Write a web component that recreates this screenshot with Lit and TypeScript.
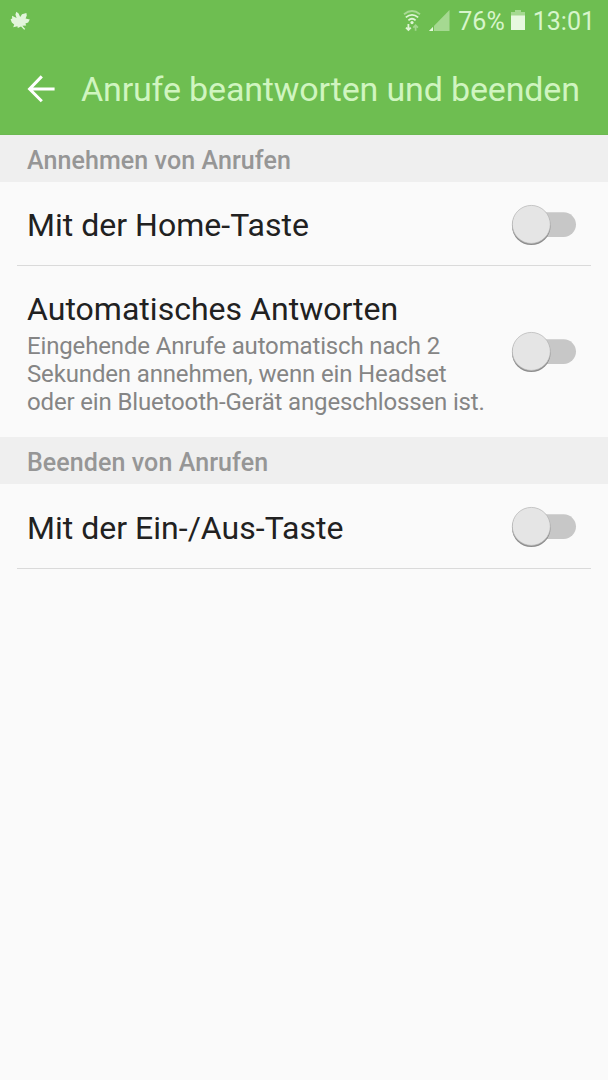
import { LitElement, html, css, nothing } from "lit";
import { customElement, property } from "lit/decorators.js";

@customElement("setting-switch")
class SettingSwitch extends LitElement {
  static styles = css`
    :host { display: block; width: 68px; height: 44px; flex: none; }
    svg { display: block; }
  `;
  render() {
    return html`<svg width="68" height="44" viewBox="0 0 68 44">
      <defs>
        <filter id="soft" x="-20%" y="-20%" width="140%" height="140%"><feGaussianBlur stdDeviation="0.7" /></filter>
      </defs>
      <rect x="22" y="9.3" width="44" height="24.6" rx="12.3" fill="#c7c7c7" />
      <circle cx="21.3" cy="22.8" r="19.3" fill="#8c8c8c" filter="url(#soft)" />
      <circle cx="21.3" cy="21.4" r="19" fill="#e5e5e5" stroke="#b4b4b4" stroke-width="0.7" />
    </svg>`;
  }
}

@customElement("setting-row")
class SettingRow extends LitElement {
  @property() label = "";
  @property({ attribute: false }) lines: string[] = [];
  static styles = css`
    :host { display: flex; align-items: center; box-sizing: border-box; padding: 0 30px 0 27px; }
    .texts { flex: 1; min-width: 0; white-space: nowrap; padding-top: 1px; }
    .label { font-size: 32px; line-height: 40px; letter-spacing: 0.02px; color: #212121; }
    .line { font-size: 24px; line-height: 28px; letter-spacing: -0.15px; color: #858585; }
    .lines { display: flex; flex-direction: column; align-items: flex-start; padding-top: 3px; }
  `;
  render() {
    return html`<div class="texts">
        <div class="label">${this.label}</div>
        ${this.lines.length
          ? html`<div class="lines">${this.lines.map((l) => html`<span class="line">${l}</span>`)}</div>`
          : nothing}
      </div>
      <setting-switch></setting-switch>`;
  }
}

@customElement("app-root")
class AppRoot extends LitElement {
  static styles = css`
    :host {
      display: flex; flex-direction: column; width: 608px; height: 1080px;
      overflow: hidden; background: #fafafa; font-family: Roboto, sans-serif;
    }
    svg { display: block; flex: none; }
    .top { background: #6ebe51; height: 135px; flex: none; box-sizing: border-box; border-bottom: 1px solid #6cb951; }
    .status { display: flex; align-items: center; height: 41px; padding: 0 13px 0 9px; color: #d7f5cb; font-size: 25px; line-height: 43px; }
    .grow { flex: 1; }
    .bar { display: flex; align-items: center; height: 95px; padding-left: 26px; }
    .title { margin-left: 25px; font-size: 34px; line-height: 40px; letter-spacing: -0.15px; color: #d0f5c0; white-space: nowrap; }
    .section { flex: none; height: 47px; line-height: 51px; padding-left: 27px; background: #efefef; color: #969696; font-size: 25px; letter-spacing: 0.09px; font-weight: 500; }
    .short { height: 83px; padding-top: 2px; }
    .last { height: 84px; }
    .tall { height: 171px; }
    .rule { flex: none; height: 1px; margin: 0 17px; background: #dadada; }
    .pct, .clock { padding-top: 2px; }
    .pct { margin-left: 8px; }
    .battery { margin-left: 6px; }
    .clock { margin-left: 8px; }
    .signal { margin-left: 8px; }
  `;
  render() {
    return html`
      <div class="top">
        <div class="status">
          <svg width="22" height="20" viewBox="0 0 22 20" fill="#e2f5db">
            <path d="M7.4 0.8 L9.6 2.6 L11.2 6 L13 3.2 L17.4 2 L17.8 4.4 L16.6 7.6 L20.8 8.4 L19.2 11.4 L16.4 12.6 L17.2 14.6 L13.4 14.8 L16.2 18 L15.2 18.8 L12 15.4 L8.8 17 L8.4 15.2 L4.2 16.2 L5.2 13.4 L2.8 11.4 L1.6 8.2 L3.2 7.4 L3 4.8 L7.6 7 L6.4 3.4 Z" />
          </svg>
          <span class="grow"></span>
          <svg width="18" height="22" viewBox="0 0 18 22" fill="none" stroke="#dff5d6" stroke-width="1.8">
            <path d="M1 4.2 Q9 -2.2 17 4.2" stroke="#a9da95" />
            <path d="M2.8 7.4 Q9 2.3 15.2 7.4" />
            <path d="M5.4 10.4 Q9 7.2 12.6 10.4" />
            <circle cx="9" cy="12.6" r="1.6" fill="#dff5d6" stroke="none" />
            <path d="M5.4 14 V20 M3 17.6 L5.4 20 L7.8 17.6" stroke-width="1.8" />
            <path d="M12.6 20.8 V15.5 M10.3 17.6 L12.6 15.2 L14.9 17.6" stroke="#a3d88e" stroke-width="1.7" />
          </svg>
          <svg class="signal" width="21" height="22" viewBox="0 0 21 22">
            <path d="M20.5 0 V21 H0 Z" fill="#a5d991" />
            <path d="M4 17 V21 H0 Z" fill="#e5f8dd" />
            <path d="M4.5 15 V21.5" stroke="#6ebe51" stroke-width="1" />
          </svg>
          <span class="pct">76%</span>
          <svg class="battery" width="14" height="21" viewBox="0 0 14 21">
            <path d="M4 0 H10 V2 H14 V7 H0 V2 H4 Z" fill="#a5d991" />
            <path d="M0 5.5 H14 V20 H0 Z" fill="#e7f8df" />
          </svg>
          <span class="clock">13:01</span>
        </div>
        <div class="bar">
          <svg width="30" height="30" viewBox="0 0 30 30" fill="none" stroke="#fff" stroke-width="3">
            <path d="M15.8 2.4 L3.6 15 L15.8 27.2 M4 15 H28.6" />
          </svg>
          <div class="title">Anrufe beantworten und beenden</div>
        </div>
      </div>
      <div class="section">Annehmen von Anrufen</div>
      <setting-row class="short" label="Mit der Home-Taste"></setting-row>
      <div class="rule"></div>
      <setting-row class="tall" label="Automatisches Antworten"
        .lines=${["Eingehende Anrufe automatisch nach 2", "Sekunden annehmen, wenn ein Headset", "oder ein Bluetooth-Gerät angeschlossen ist."]}></setting-row>
      <div class="section">Beenden von Anrufen</div>
      <setting-row class="short last" label="Mit der Ein-/Aus-Taste"></setting-row>
      <div class="rule"></div>
    `;
  }
}
